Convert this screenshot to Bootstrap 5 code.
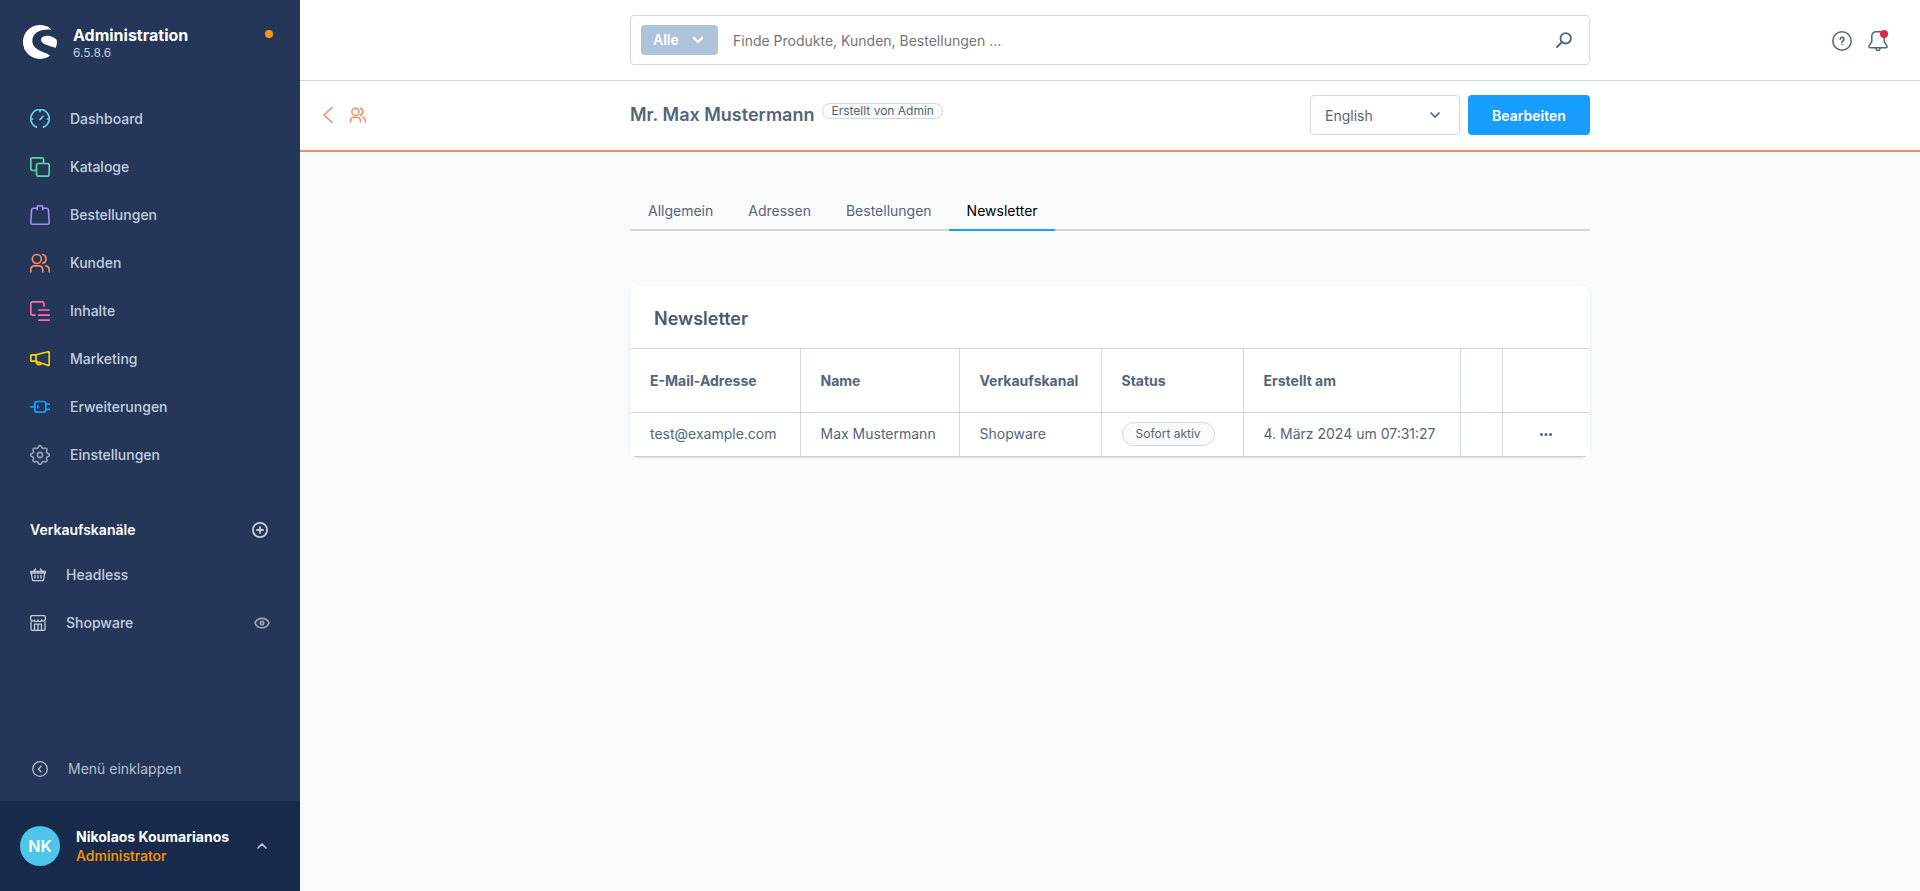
<!DOCTYPE html>
<html lang="de">
<head>
<meta charset="utf-8">
<meta name="viewport" content="width=device-width, initial-scale=1">
<title>Mr. Max Mustermann | Kunden | Administration</title>
<link href="https://cdn.jsdelivr.net/npm/bootstrap@5.3.0/dist/css/bootstrap.min.css" rel="stylesheet">
<style>
  :root { --ink: #52667a; --line: #d1d9e0; --brand: #189eff; --module: #f88962; }
  body { font-family: Inter, "Liberation Sans", sans-serif; font-size: 14px; line-height: 20px; color: var(--ink); background: #f9fafb; }
  svg { display: block; flex: none; fill: none; stroke: currentColor; stroke-linecap: round; stroke-linejoin: round; }
  a { text-decoration: none; color: inherit; }

  .side { width: 300px; background: #243758; color: #c2cfe0; }
  .side-head { height: 95px; padding: 25px 27px 0 23px; }
  .side-title { font-size: 16px; font-weight: 700; line-height: 20px; color: #fff; }
  .side-version { font-size: 12px; line-height: 16px; }
  .status-dot { width: 8px; height: 8px; border-radius: 50%; background: #ff9800; margin-top: 5px; }
  .side .nav-link { height: 48px; padding: 0 30px; gap: 20px; font-weight: 500; font-size: 14px; color: inherit; }
  .channels-head { height: 42px; margin-top: 30px; padding: 0 32px 0 30px; font-size: 14px; line-height: 20px; font-weight: 600; color: #fff; }
  .icon-btn { border: 0; padding: 0; background: none; color: inherit; }
  .tone { color: #c2cfe0; }
  .collapse-link { height: 48px; margin-bottom: 8px; padding: 0 32px; gap: 20px; color: #b3bfd0; }
  .side-user { height: 90px; padding: 0 32px 0 20px; line-height: 19px; background: #182b4d; }
  .user-name { font-weight: 700; color: #fff; }
  .user-role { font-weight: 500; color: #ff9800; }
  .avatar { width: 40px; height: 40px; background: #4dc6e9; color: #fff; font-size: 16px; font-weight: 600; }

  .bar { display: grid; grid-template-columns: minmax(0, 1fr) minmax(0, 960px) minmax(0, 1fr); align-items: center; background: #fff; }
  .topbar { height: 81px; border-bottom: 1px solid var(--line); }
  .smartbar { height: 71px; padding-bottom: 1px; border-bottom: 2px solid var(--module); }
  .tools { padding-top: 2px; }
  .search { height: 50px; border: 1px solid var(--line); border-radius: 4px; padding: 0 17px 0 10px; }
  .search-type { height: 30px; width: 77px; padding: 0 13px 0 12px; border: 0; border-radius: 4px; background: #adc3da; color: #fff; font-size: 14px; font-weight: 600; }
  .search input { border: 0; padding: 0 15px; font-size: 14px; color: var(--ink); background: none; box-shadow: none; height: 46px; }
  .search input::placeholder { color: #757575; opacity: 1; }
  .alert-dot { top: -1px; right: 0; width: 8px; height: 8px; background: #de294c; }
  .page-title { font-size: 18px; line-height: 24px; font-weight: 600; }
  .pill { display: inline-flex; align-items: center; border: 1px solid var(--line); border-radius: 24px; background: #f9fafb; font-size: 12px; }
  .pill-small { height: 16px; padding: 0 8px; margin-bottom: 8px; }
  .pill-status { height: 24px; padding: 0 13px; }
  .lang { width: 150px; height: 40px; border-color: var(--line); border-radius: 4px; padding: 0 14px; font-size: 14px; color: var(--ink); background-position: right 18px center; background-size: 12px 12px;
    background-image: url("data:image/svg+xml,%3csvg xmlns='http://www.w3.org/2000/svg' viewBox='0 0 12 12'%3e%3cpath fill='none' stroke='%2352667a' stroke-width='1.7' stroke-linecap='round' stroke-linejoin='round' d='M2 4l4 4 4-4'/%3e%3c/svg%3e"); }
  .btn-brand { width: 122px; height: 40px; padding: 0; border: 0; border-radius: 4px; background: var(--brand); color: #fff; font-size: 14px; font-weight: 600; }

  .content { max-width: 960px; padding-top: 38px; }
  .tabs { border-bottom: 2px solid var(--line); margin-bottom: 55px; }
  .tabs .nav-link { padding: 11px 17px 8px 18px; margin-bottom: -2px; border-bottom: 2px solid transparent; color: var(--ink); }
  .tabs .nav-link.active { color: #000; border-color: var(--brand); }
  .panel { background: #fff; border-radius: 8px; box-shadow: 0 1px 1px rgba(0,0,0,.08), 0 2px 1px rgba(0,0,0,.06), 0 1px 3px rgba(0,0,0,.1); }
  .panel h2 { margin: 0; padding: 21px 24px 17px; font-size: 18px; line-height: 24px; font-weight: 600; color: #485a6c; }
  .grid { width: 100%; table-layout: fixed; background: #fff; }
  .grid th, .grid td { border-top: 1px solid var(--line); border-right: 1px solid var(--line); padding: 0 0 0 20px; white-space: nowrap; }
  .grid th:last-child, .grid td:last-child { border-right: 0; }
  .grid th { height: 64px; font-weight: 700; }
  .grid td { height: 43px; }
  .grid td:last-child { padding: 0; }
</style>
<script src="https://cdn.jsdelivr.net/npm/bootstrap@5.3.0/dist/js/bootstrap.bundle.min.js"></script>
</head>
<body>
<div class="d-flex min-vh-100">

  <aside class="side d-flex flex-column flex-shrink-0">
    <div class="side-head d-flex">
      <svg width="34" height="34" viewBox="0 0 102 102" style="fill:#fff;stroke:none" aria-hidden="true">
        <path d="M86 14A51 51 0 1 0 81 92C72 81 28 78 28 48C28 24 50 11 86 14Z"/>
        <path d="M54 45C54 35 64 32 75 32C86 33 97 38 101 45C103 53 101 62 98 69C88 64 54 59 54 45Z"/>
      </svg>
      <div class="flex-grow-1 ms-3">
        <div class="side-title">Administration</div>
        <div class="side-version">6.5.8.6</div>
      </div>
      <span class="status-dot"></span>
    </div>

    <nav class="nav flex-column" aria-label="Hauptmenü">
      <a class="nav-link d-flex align-items-center" href="#">
        <svg width="20" height="20" viewBox="0 0 20 20" stroke-width="1.7" style="stroke:#5fd3ee"><path d="M6.5 18.1A9.200 9.200 0 1 1 13.500 18.100M10 1v1.600M1 10h1.600M17.400 10H19M10 10.600L13 7.300"/></svg>Dashboard</a>
      <a class="nav-link d-flex align-items-center" href="#">
        <svg width="20" height="20" viewBox="0 0 20 20" stroke-width="1.7" style="stroke:#57d9a3"><path d="M6 13.500H2.500A1.800 1.800 0 0 1 .8 11.700V2.500A1.800 1.800 0 0 1 2.500.8H11.700A1.800 1.800 0 0 1 13.500 2.500V6"/><rect x="6.500" y="6.500" width="12.700" height="12.700" rx="1.800"/></svg>Kataloge</a>
      <a class="nav-link d-flex align-items-center" href="#">
        <svg width="20" height="20" viewBox="0 0 20 20" stroke-width="1.600" style="stroke:#a092f0"><path d="M7.200 5V2A1.200 1.200 0 0 1 8.400.8H11.600A1.200 1.200 0 0 1 12.800 2V5M7 3.300H3.200A1.600 1.600 0 0 0 1.600 4.800L.8 17.600A1.500 1.500 0 0 0 2.300 19.200H17.700A1.500 1.500 0 0 0 19.200 17.600L18.400 4.800A1.600 1.600 0 0 0 16.800 3.300H13"/></svg>Bestellungen</a>
      <a class="nav-link d-flex align-items-center" href="#">
        <svg width="20" height="20" viewBox="0 0 20 20" stroke-width="1.700" style="stroke:#f88962"><circle cx="6.800" cy="6" r="4.500"/><path d="M.8 18.800V16.400A3.500 3.500 0 0 1 4.300 12.900H9.300A3.500 3.500 0 0 1 12.800 16.400V18.800M12.800 1.500A4.600 4.600 0 0 1 12.800 10.300M15.800 12.900A4 4 0 0 1 19.200 16.800V18.800"/></svg>Kunden</a>
      <a class="nav-link d-flex align-items-center" href="#">
        <svg width="20" height="20" viewBox="0 0 20 20" stroke-width="1.700" style="stroke:#ff68b4"><path d="M5 14.200H2.600A1.800 1.800 0 0 1 .8 12.400V2.600A1.800 1.800 0 0 1 2.600.8H12.200A1.800 1.800 0 0 1 14 2.600V5M8.800 9H19.200M8.800 14.200H19.200M8.800 19.200H19.200"/></svg>Inhalte</a>
      <a class="nav-link d-flex align-items-center" href="#">
        <svg width="20" height="20" viewBox="0 0 20 20" stroke-width="1.700" style="stroke:#ffd700"><path d="M6 5.800L18.200 2.700A.8.8 0 0 1 19.200 3.500V15.800A.8.8 0 0 1 18.200 16.500L6 12.200ZM6 5.800H1.800A1 1 0 0 0 .8 6.800V11.200A1 1 0 0 0 1.800 12.200H6M6.300 12.500A2.700 2.700 0 0 0 11.300 14.200"/></svg>Marketing</a>
      <a class="nav-link d-flex align-items-center" href="#">
        <svg width="20" height="20" viewBox="0 0 20 20" stroke-width="1.700" style="stroke:#189eff"><rect x="4.800" y="4.500" width="11" height="10.600" rx="2.200"/><path d="M.8 9.800H4.800M15.800 7.200H19.300M15.800 12.400H19.300M8 8.800V10.800"/></svg>Erweiterungen</a>
      <a class="nav-link d-flex align-items-center" href="#">
        <svg width="20" height="20" viewBox="0 0 20 20" stroke-width="1.600" style="stroke:#93a4b4"><path d="M8.200 2.500A1.800 1.800 0 0 1 11.800 2.500A1.900 1.900 0 0 0 14.100 3.400A1.800 1.800 0 0 1 16.600 5.900A1.900 1.900 0 0 0 17.500 8.200A1.800 1.800 0 0 1 17.500 11.800A1.900 1.900 0 0 0 16.600 14.100A1.800 1.800 0 0 1 14.100 16.600A1.900 1.900 0 0 0 11.800 17.500A1.800 1.800 0 0 1 8.200 17.500A1.900 1.900 0 0 0 5.900 16.600A1.800 1.800 0 0 1 3.400 14.100A1.900 1.900 0 0 0 2.500 11.800A1.800 1.800 0 0 1 2.500 8.200A1.900 1.900 0 0 0 3.400 5.900A1.800 1.800 0 0 1 5.900 3.400A1.900 1.900 0 0 0 8.200 2.500Z"/><circle cx="10" cy="10" r="2.600"/></svg>Einstellungen</a>
    </nav>

    <div class="channels-head d-flex align-items-center justify-content-between">
      Verkaufskanäle
      <button class="icon-btn tone" type="button" aria-label="Verkaufskanal hinzufügen">
        <svg width="16" height="16" viewBox="0 0 16 16" stroke-width="1.800"><circle cx="8" cy="8" r="7.100"/><path d="M8 5V11M5 8H11"/></svg></button>
    </div>
    <nav class="nav flex-column" aria-label="Verkaufskanäle">
      <a class="nav-link d-flex align-items-center" href="#">
        <svg width="16" height="16" viewBox="0 0 16 16" stroke-width="1.300"><path d="M.7 4.500H15.300V6.200H.7ZM1.300 6.200L2.400 12.700A1.200 1.200 0 0 0 3.600 13.700H12.400A1.200 1.200 0 0 0 13.600 12.700L14.700 6.200M5.600 2L3.700 4.500M10.400 2L12.300 4.500M5 8.500V11M8 8.500V11M11 8.500V11"/></svg>Headless</a>
      <a class="nav-link d-flex align-items-center" href="#">
        <svg width="16" height="16" viewBox="0 0 16 16" stroke-width="1.300"><path d="M1 7V14A1.300 1.300 0 0 0 2.300 15.300H13.700A1.300 1.300 0 0 0 15 14V7M2 .7H14Q15.300.7 15.300 2V4.500A1.850 1.850 0 0 1 11.700 4.800A1.850 1.850 0 0 1 8 4.800A1.850 1.850 0 0 1 4.300 4.800A1.850 1.850 0 0 1 .7 4.500V2Q.7.7 2 .7ZM4.500 15V9.200H11.500V15M8 9.200V15"/></svg>
        <span class="flex-grow-1">Shopware</span>
        <svg width="16" height="12" viewBox="0 0 16 12" stroke-width="1.700" style="color:#9aa8b5"><path d="M1 6C3.500-.3 12.500-.3 15 6C12.500 12.300 3.500 12.300 1 6Z"/><circle cx="8" cy="6" r="1.700"/></svg></a>
    </nav>

    <a class="collapse-link d-flex align-items-center mt-auto" href="#">
      <svg width="16" height="16" viewBox="0 0 16 16" stroke-width="1.300"><circle cx="8" cy="8" r="7.300"/><path d="M9 5.300L6.400 8L9 10.700" stroke-width="1.500"/></svg>Menü einklappen</a>

    <div class="side-user d-flex align-items-center">
      <span class="avatar rounded-circle d-flex align-items-center justify-content-center">NK</span>
      <div class="flex-grow-1 ms-3">
        <div class="user-name">Nikolaos Koumarianos</div>
        <div class="user-role">Administrator</div>
      </div>
      <button class="icon-btn" type="button" aria-label="Benutzermenü">
        <svg width="12" height="12" viewBox="0 0 12 12" stroke-width="1.600"><path d="M2 8L6 4L10 8"/></svg></button>
    </div>
  </aside>

  <div class="flex-grow-1">
    <header class="bar topbar">
      <div></div>
      <form class="search d-flex align-items-center" role="search">
        <button class="search-type d-flex align-items-center justify-content-between flex-shrink-0" type="button">Alle
          <svg width="14" height="12" viewBox="0 0 14 12" stroke-width="2.400"><path d="M3 4L7 8L11 4"/></svg></button>
        <input class="form-control" type="text" aria-label="Suche" placeholder="Finde Produkte, Kunden, Bestellungen ...">
        <button class="icon-btn" type="submit" aria-label="Suchen" style="color:#52667a">
          <svg width="16" height="16" viewBox="0 0 16 16" stroke-width="1.900"><circle cx="9.700" cy="6.300" r="5.200"/><path d="M6 10L1 15"/></svg></button>
      </form>
      <div class="tools d-flex justify-content-end gap-3 pe-4 me-2">
        <button class="icon-btn" type="button" aria-label="Hilfe">
          <svg width="20" height="20" viewBox="0 0 20 20" stroke-width="1.500"><circle cx="10" cy="10" r="9.200"/><path d="M8.200 8.300A1.900 1.900 0 1 1 10.800 10Q10 10.400 10 11.300M10 13.400V13.500" stroke-width="1.600"/></svg></button>
        <button class="icon-btn position-relative" type="button" aria-label="Benachrichtigungen">
          <svg width="20" height="20" viewBox="0 0 20 20" stroke-width="1.500"><path d="M8 .8H12A4.200 4.200 0 0 1 16.200 5V10.500L18.900 14.800A1.300 1.300 0 0 1 17.800 16.800H2.200A1.300 1.300 0 0 1 1.100 14.800L3.800 10.500V5A4.200 4.200 0 0 1 8 .8ZM8 17.500A2 2 0 0 0 12 17.500"/></svg>
          <span class="alert-dot position-absolute rounded-circle"></span></button>
      </div>
    </header>

    <div class="bar smartbar">
      <div class="d-flex align-items-center ps-3" style="color:var(--module)">
        <a href="#" aria-label="Zurück" class="ms-1 me-3"><svg width="14" height="18" viewBox="0 0 14 18" stroke-width="1.500"><path d="M12 1.500L4 9L12 16.500"/></svg></a>
        <svg width="16" height="16" viewBox="0 0 20 20" stroke-width="1.800"><circle cx="6.800" cy="6" r="4.500"/><path d="M.8 18.800V16.400A3.500 3.500 0 0 1 4.300 12.900H9.300A3.500 3.500 0 0 1 12.800 16.400V18.800M12.800 1.500A4.600 4.600 0 0 1 12.800 10.300M15.800 12.900A4 4 0 0 1 19.200 16.800V18.800"/></svg>
      </div>
      <div class="d-flex align-items-center gap-2">
        <h1 class="page-title mb-0">Mr. Max Mustermann</h1>
        <span class="pill pill-small">Erstellt von Admin</span>
        <select class="form-select lang ms-auto" aria-label="Sprache"><option>English</option><option>Deutsch</option></select>
        <button class="btn btn-brand" type="button">Bearbeiten</button>
      </div>
      <div></div>
    </div>

    <main class="content mx-auto">
      <nav class="tabs nav">
        <a class="nav-link" href="#">Allgemein</a>
        <a class="nav-link" href="#">Adressen</a>
        <a class="nav-link" href="#">Bestellungen</a>
        <a class="nav-link active" href="#" aria-current="page">Newsletter</a>
      </nav>

      <section class="panel">
        <h2>Newsletter</h2>
        <table class="grid">
          <colgroup><col style="width:170px"><col style="width:159px"><col style="width:142px"><col style="width:142px"><col style="width:217px"><col style="width:42px"><col></colgroup>
          <thead><tr><th>E-Mail-Adresse</th><th>Name</th><th>Verkaufskanal</th><th>Status</th><th>Erstellt am</th><th></th><th></th></tr></thead>
          <tbody><tr>
            <td>test@example.com</td><td>Max Mustermann</td><td>Shopware</td>
            <td><span class="pill pill-status">Sofort aktiv</span></td>
            <td>4. März 2024 um 07:31:27</td><td></td>
            <td><button class="icon-btn d-block mx-auto" type="button" aria-label="Aktionen"><svg width="14" height="12" viewBox="0 0 14 12" style="fill:currentColor;stroke:none"><circle cx="2.500" cy="6.500" r="1.500"/><circle cx="7" cy="6.500" r="1.500"/><circle cx="11.500" cy="6.500" r="1.500"/></svg></button></td>
          </tr></tbody>
        </table>
      </section>
    </main>
  </div>
</div>
</body>
</html>
